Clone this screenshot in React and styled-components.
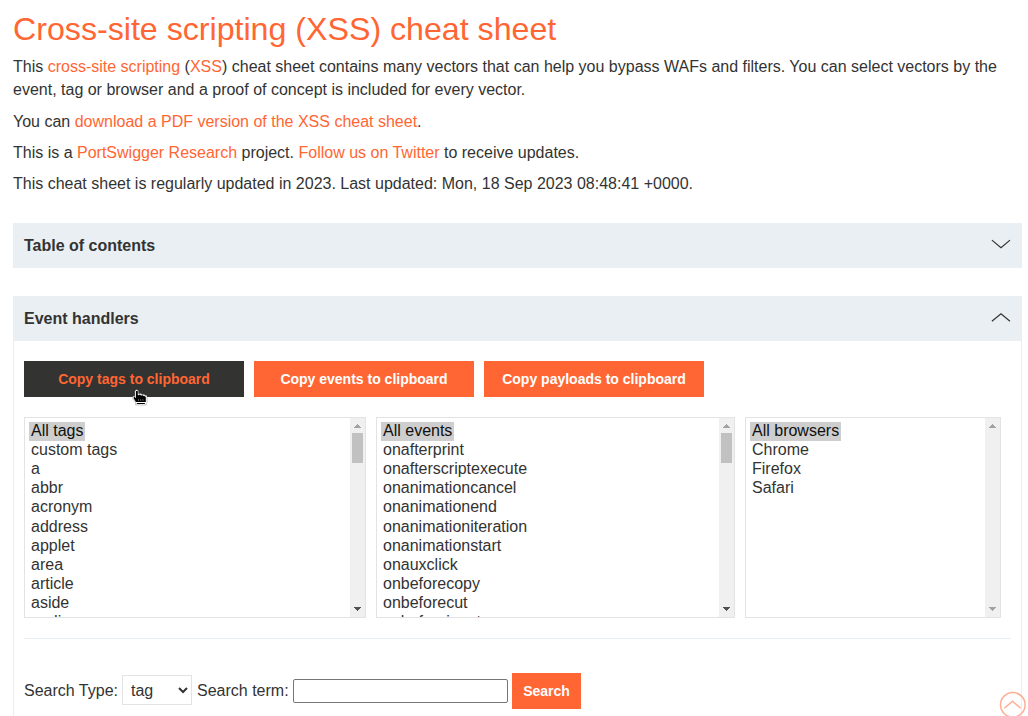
import React from 'react';
import styled, { createGlobalStyle } from 'styled-components';

const Global = createGlobalStyle`
  * { box-sizing: border-box; }
  html, body { margin: 0; height: 716px; overflow: hidden; background: #fff; }
  body, button, input, select { font-family: "Liberation Sans", Arial, sans-serif; }
  body { font-size: 16px; color: #333332; }
`;

const Page = styled.main`
  width: 1028px;
  height: 716px;
  overflow: hidden;
  position: relative;
  padding: 8px 6px 0 13px;
  display: flex;
  flex-direction: column;
`;

const Title = styled.h1`
  margin: 0 0 5.2px;
  font-size: 32.16px;
  font-weight: 400;
  line-height: 42px;
  color: #ff6633;
`;

const Paragraph = styled.p`
  margin: 0 0 8px;
  line-height: 23.2px;
  white-space: nowrap;
`;

const Link = styled.a`
  color: #ff6633;
  text-decoration: none;
`;

const Intro = styled.header`
  height: 215px;
  flex: none;
`;

const SectionHeader = styled.h2`
  flex: none;
  margin: ${p => (p.$spaced ? '28px 0 0' : '0')};
  height: 45px;
  padding: 0 11px;
  display: flex;
  align-items: center;
  justify-content: space-between;
  background: #e9eff2;
  font-size: 16px;
  font-weight: 700;
`;

const ChevronIcon = styled.svg`
  margin-bottom: 2px;
`;

const Panel = styled.section`
  flex: 1;
  border: solid #e8eef1;
  border-width: 0 1px;
  padding: 20px 10px 0;
`;

const ButtonRow = styled.div`
  display: flex;
  gap: 10px;
  margin-bottom: 20px;
`;

const Button = styled.button`
  width: ${p => p.$width}px;
  height: 36px;
  padding: 0;
  border: 0;
  background: ${p => (p.$dark ? '#333332' : '#ff6633')};
  color: ${p => (p.$dark ? '#ff6633' : '#fff')};
  font-size: 14px;
  font-weight: 700;
  cursor: pointer;
`;

const Lists = styled.div`
  display: grid;
  grid-template-columns: 342px 359px 256px;
  gap: 10px;
  padding-bottom: 20px;
  border-bottom: 1px solid #e8eef1;
`;

const ListBox = styled.div`
  height: 201px;
  border: 1px solid #e3e3e3;
  display: flex;
  overflow: hidden;
`;

const Options = styled.div`
  flex: 1;
  padding: 4px;
  display: flex;
  flex-direction: column;
  align-items: flex-start;
`;

const Option = styled.div`
  flex: none;
  height: 19.12px;
  line-height: 18px;
  padding: 0 2px;
  white-space: nowrap;
  background: ${p => (p.$selected ? '#cecece' : 'transparent')};
  color: ${p => (p.$selected ? '#101010' : '#333332')};
`;

const ScrollTrack = styled.div`
  width: 15px;
  background: #f0f0f0;
  display: flex;
  flex-direction: column;
  align-items: center;
`;

const Thumb = styled.div`
  width: 11px;
  height: 30px;
  background: #c1c1c1;
`;

const Spacer = styled.div`
  flex: 1;
`;

const Form = styled.form`
  display: flex;
  align-items: center;
  height: 36px;
  margin-top: 34px;
`;

const Label = styled.label`
  white-space: pre;
  width: ${p => p.$width}px;
`;

const Select = styled.select`
  width: 70px;
  height: 30px;
  margin: 0 5px 2px 0;
  padding: 0 0 0 4px;
  border: 1px solid #e3e3e3;
  border-radius: 0;
  background: #fff;
  color: #333332;
  font-size: 16px;
`;

const Input = styled.input`
  width: 215px;
  height: 24px;
  margin-right: 4px;
  padding: 1px 2px;
  border: 1px solid #767676;
  border-radius: 2px;
  background: #fff;
`;

const Pointer = styled.svg`
  position: absolute;
  left: 132px;
  top: 389px;
`;

const BackToTop = styled.a`
  position: absolute;
  left: 999px;
  top: 691px;
  height: 25px;
  overflow: hidden;
`;

const Chevron = ({ up }) => (
  <ChevronIcon width="20" height="11" viewBox="0 0 20 11" fill="none" stroke="#333332" strokeWidth="1.2">
    <path d={up ? 'M.9 9.3 10 1.7l9 7.6' : 'M.9 1.1 10 8.7l9-7.6'} />
  </ChevronIcon>
);

const Arrow = ({ down, color }) => (
  <svg width="15" height="15" viewBox="0 0 15 15" fill={color} shapeRendering="crispEdges">
    <path d={down ? 'M4 5h7v1h-1v1H9v1H8v1H7V8H6V7H5V6H4z' : 'M7 6h1v1h1v1h1v1h1v1H4V9h1V8h1V7h1z'} />
  </svg>
);

const OptionList = ({ items, scrollable }) => (
  <ListBox role="listbox">
    <Options>
      {items.map((item, i) => <Option role="option" key={item} $selected={i === 0}>{item}</Option>)}
    </Options>
    <ScrollTrack>
      <Arrow color="#a3a3a3" />
      {scrollable && <Thumb />}
      <Spacer />
      <Arrow down color={scrollable ? '#505050' : '#a3a3a3'} />
    </ScrollTrack>
  </ListBox>
);

const tags = ['All tags', 'custom tags', 'a', 'abbr', 'acronym', 'address', 'applet', 'area', 'article', 'aside', 'audio'];
const events = ['All events', 'onafterprint', 'onafterscriptexecute', 'onanimationcancel', 'onanimationend', 'onanimationiteration', 'onanimationstart', 'onauxclick', 'onbeforecopy', 'onbeforecut', 'onbeforeinput'];
const browsers = ['All browsers', 'Chrome', 'Firefox', 'Safari'];

export default function App() {
  return (
    <>
      <Global />
      <Page>
        <Intro>
          <Title>Cross-site scripting (XSS) cheat sheet</Title>
          <Paragraph>
            This <Link>cross-site scripting</Link> (<Link>XSS</Link>) cheat sheet contains many vectors that can help you bypass WAFs and filters. You can select vectors by the<br />
            event, tag or browser and a proof of concept is included for every vector.
          </Paragraph>
          <Paragraph>You can <Link>download a PDF version of the XSS cheat sheet</Link>.</Paragraph>
          <Paragraph>This is a <Link>PortSwigger Research</Link> project. <Link>Follow us on Twitter</Link> to receive updates.</Paragraph>
          <Paragraph>This cheat sheet is regularly updated in 2023. Last updated: Mon, 18 Sep 2023 08:48:41 +0000.</Paragraph>
        </Intro>
        <SectionHeader>Table of contents<Chevron /></SectionHeader>
        <SectionHeader $spaced>Event handlers<Chevron up /></SectionHeader>
        <Panel>
          <ButtonRow>
            <Button $width={220} $dark>Copy tags to clipboard</Button>
            <Button $width={220}>Copy events to clipboard</Button>
            <Button $width={220}>Copy payloads to clipboard</Button>
          </ButtonRow>
          <Lists>
            <OptionList items={tags} scrollable />
            <OptionList items={events} scrollable />
            <OptionList items={browsers} />
          </Lists>
          <Form onSubmit={e => e.preventDefault()}>
            <Label htmlFor="type" $width={98}>Search Type:</Label>
            <Select id="type" defaultValue="tag"><option>tag</option></Select>
            <Label htmlFor="term" $width={96}>Search term:</Label>
            <Input id="term" />
            <Button $width={69}>Search</Button>
          </Form>
        </Panel>
        <Pointer width="17" height="18" viewBox="0 0 17 18">
          <path d="M3 2Q4.5-.5 6.4 2v3l2.2-.4 1.6.9 1.8-.1 1.1.9 1.5.3.5 1.2v5.6l-.8 1V16H3.6v-2.4L.8 9.8V7.4l1.4-.3L3 8z" fill="#fff" stroke="#8c8c8c" strokeWidth=".5" />
          <path d="M4 2h1.8v4l1 .3 1.1-.8 1.2 1 1.6-.3.9.8 1.3.2.9.8v5H3.9L1.8 9.5V8h1L4 9.2zM4.8 13.9h8.1v1H4.8z" fill="#000" />
          <path d="M6.5 10v2M8.7 10v2M10.9 10v2" stroke="#777" strokeWidth=".7" />
        </Pointer>
        <BackToTop aria-label="Back to top">
          <svg width="28" height="28" viewBox="0 0 28 28" fill="none" stroke="#ffad94" strokeWidth="1.5">
            <circle cx="13.8" cy="13.8" r="12.3" />
            <path d="m5.3 17.3 8.2-7 8.2 7" />
          </svg>
        </BackToTop>
      </Page>
    </>
  );
}
